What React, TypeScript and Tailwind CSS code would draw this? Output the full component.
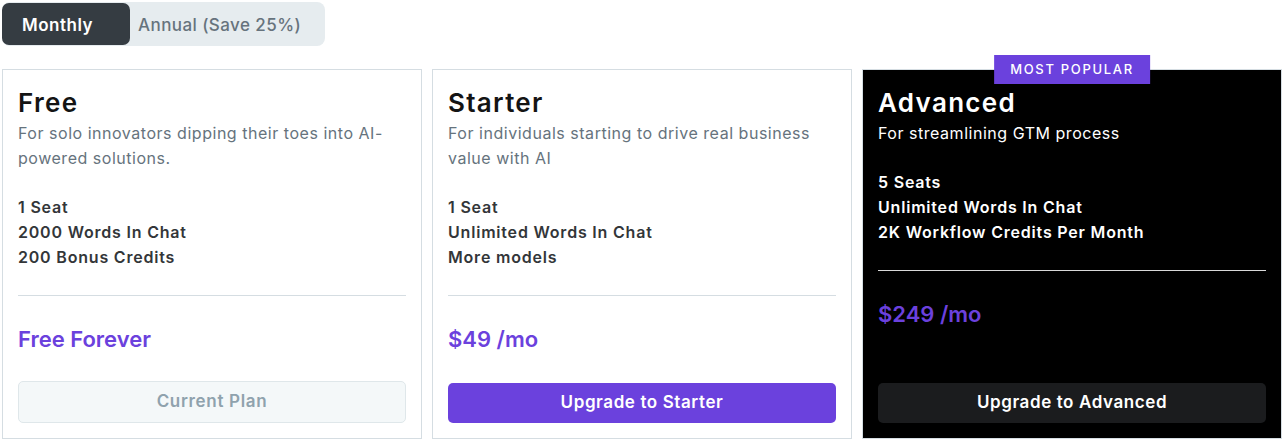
import React from "react";

type Plan = {
  name: string;
  desc: string;
  features: string[];
  price: string;
  cta: string;
  kind: "current" | "primary" | "dark";
  popular?: boolean;
};

const plans: Plan[] = [
  {
    name: "Free",
    desc: "For solo innovators dipping their toes into AI-powered solutions.",
    features: ["1 Seat", "2000 Words In Chat", "200 Bonus Credits"],
    price: "Free Forever",
    cta: "Current Plan",
    kind: "current",
  },
  {
    name: "Starter",
    desc: "For individuals starting to drive real business value with AI",
    features: ["1 Seat", "Unlimited Words In Chat", "More models"],
    price: "$49 /mo",
    cta: "Upgrade to Starter",
    kind: "primary",
  },
  {
    name: "Advanced",
    desc: "For streamlining GTM process",
    features: ["5 Seats", "Unlimited Words In Chat", "2K Workflow Credits Per Month"],
    price: "$249 /mo",
    cta: "Upgrade to Advanced",
    kind: "dark",
    popular: true,
  },
];

const PlanCard = ({ plan }: { plan: Plan }) => {
  const dark = plan.kind === "dark";
  return (
    <div
      className={
        dark
          ? "relative flex flex-col border border-[#d5dde2] bg-black px-[15px] pt-[17px] pb-[15px]"
          : "relative flex flex-col border border-[#d5dde2] bg-white px-[15px] pt-[17px] pb-[15px]"
      }
    >
      {plan.popular && (
        <div className="absolute -top-[15px] left-1/2 -translate-x-1/2 bg-[#6b41dd] px-[16px] py-[5px] text-[13px] font-medium tracking-[0.13em] text-white leading-[19px]">
          MOST POPULAR
        </div>
      )}

      <h3
        className={
          dark
            ? "text-[26px] font-semibold leading-[32px] tracking-[0.05em] text-white"
            : "text-[26px] font-semibold leading-[32px] tracking-[0.05em] text-[#141414]"
        }
      >
        {plan.name}
      </h3>
      <p
        className={
          dark
            ? "mt-[2px] text-[16px] leading-[25px] tracking-[0.033em] text-white"
            : "mt-[2px] text-[16px] leading-[25px] tracking-[0.033em] text-[#66737d]"
        }
      >
        {plan.desc}
      </p>

      <div
        className={
          dark
            ? "mt-[24px] flex flex-col text-[16px] font-semibold leading-[25px] tracking-[0.05em] text-white"
            : "mt-[24px] flex flex-col text-[16px] font-semibold leading-[25px] tracking-[0.05em] text-[#333639]"
        }
      >
        {plan.features.map((f) => (
          <span key={f}>{f}</span>
        ))}
      </div>

      <div className={dark ? "mt-[25px] h-px bg-[#d9d9d9]" : "mt-[25px] h-px bg-[#d5dde2]"} />

      <p className="mt-[29px] text-[22px] font-semibold leading-[28px] text-[#6b41dd]">
        {plan.price}
      </p>

      <div className="mt-auto pt-[28px]">
        {plan.kind === "current" && (
          <button className="flex h-[42px] w-full items-center justify-center rounded-[5px] border border-[#dfe7ea] bg-[#f4f8f9] text-[17px] font-semibold tracking-[0.04em] text-[#8fa2ad]">
            {plan.cta}
          </button>
        )}
        {plan.kind === "primary" && (
          <button className="flex h-[40px] w-full items-center justify-center rounded-[5px] bg-[#6b41dd] text-[17px] font-semibold tracking-[0.035em] text-white">
            {plan.cta}
          </button>
        )}
        {plan.kind === "dark" && (
          <button className="flex h-[40px] w-full items-center justify-center rounded-[5px] bg-[#1b1c1e] text-[17px] font-semibold tracking-[0.035em] text-white">
            {plan.cta}
          </button>
        )}
      </div>
    </div>
  );
};

export default function App() {
  return (
    <div className="min-h-screen bg-white px-[2px] pt-[2px] font-['Inter',sans-serif]">
      <div className="flex h-[44px] w-[323px] items-center rounded-[8px] bg-[#e6ecef]">
        <button className="h-[42px] w-[128px] rounded-[7px] bg-[#353c42] pl-[20px] pt-[3px] text-left text-[17px] font-semibold tracking-[0.03em] text-white">
          Monthly
        </button>
        <button className="h-[42px] pl-[8px] pt-[3px] text-[17px] font-medium tracking-[0.025em] text-[#66737d]">
          Annual (Save 25%)
        </button>
      </div>

      <div className="mt-[23px] grid w-[1280px] grid-cols-3 gap-[10px]">
        {plans.map((p) => (
          <PlanCard key={p.name} plan={p} />
        ))}
      </div>
    </div>
  );
}
